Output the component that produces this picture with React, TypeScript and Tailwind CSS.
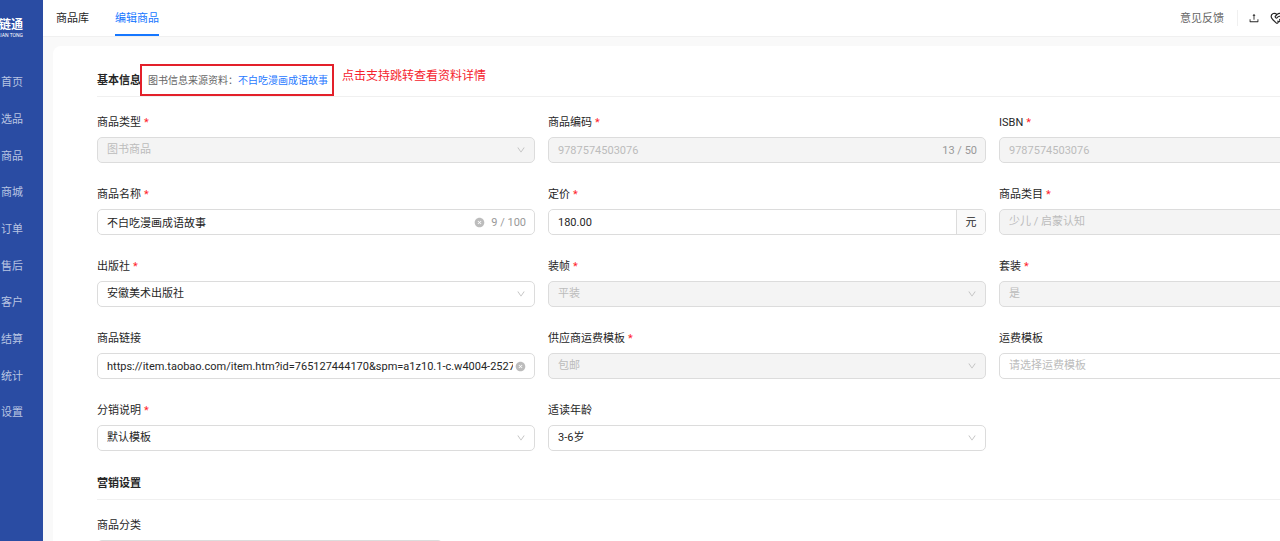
import React from 'react';
import { HeartHandshake } from 'lucide-react';
import { AiFillCloseCircle, AiOutlineDown, AiOutlineUpload } from 'react-icons/ai';

const NAV_ITEMS = ['首页', '选品', '商品', '商城', '订单', '售后', '客户', '结算', '统计', '设置'];

interface FieldProps {
  id: string;
  label: string;
  required?: boolean;
  children: React.ReactNode;
}

const Field: React.FC<FieldProps> = ({ id, label, required, children }) => (
  <div className="flex min-w-0 flex-col gap-[7px]">
    <label htmlFor={id} className="flex h-4 items-center gap-[3px] pt-[2px] leading-4">
      {label}
      {required && <span className="text-[#ff1f2d]">*</span>}
    </label>
    {children}
  </div>
);

interface BoxProps {
  disabled?: boolean;
  children: React.ReactNode;
}

const Box: React.FC<BoxProps> = ({ disabled, children }) => (
  <div
    className={`flex h-[26px] items-center overflow-hidden rounded-[5px] border border-[#dcdcdc] ${
      disabled ? 'bg-[#f4f4f4]' : 'bg-white'
    }`}
  >
    {children}
  </div>
);

interface TextFieldProps {
  id: string;
  label: string;
  value: string;
  required?: boolean;
  disabled?: boolean;
  clearable?: boolean;
  count?: string;
  unit?: string;
}

const TextField: React.FC<TextFieldProps> = ({ id, label, value, required, disabled, clearable, count, unit }) => (
  <Field id={id} label={label} required={required}>
    <Box disabled={disabled}>
      <input
        id={id}
        type="text"
        defaultValue={value}
        disabled={disabled}
        className="ml-[9px] h-full min-w-0 flex-1 bg-transparent outline-none disabled:text-[#bcbcbc]"
      />
      {clearable && (
        <button type="button" aria-label="清除" className="ml-[2px] text-[#bcbcbc]">
          <AiFillCloseCircle className="h-[11px] w-[11px]" />
        </button>
      )}
      {count && <span className="ml-[6px] pt-[2px] text-[#999]">{count}</span>}
      {unit ? (
        <span className="flex h-full w-[29px] items-center justify-center border-l border-[#dcdcdc] bg-[#fafafa] pt-[2px]">
          {unit}
        </span>
      ) : (
        <span className="w-2" />
      )}
    </Box>
  </Field>
);

interface SelectFieldProps {
  id: string;
  label: string;
  value: string;
  required?: boolean;
  disabled?: boolean;
  placeholder?: boolean;
}

const SelectField: React.FC<SelectFieldProps> = ({ id, label, value, required, disabled, placeholder }) => (
  <Field id={id} label={label} required={required}>
    <Box disabled={disabled}>
      <select
        id={id}
        disabled={disabled}
        className={`h-full min-w-0 flex-1 appearance-none bg-transparent pl-[9px] outline-none disabled:text-[#bcbcbc] disabled:opacity-100 ${
          placeholder ? 'text-[#bcbcbc]' : ''
        }`}
      >
        <option>{value}</option>
      </select>
      <AiOutlineDown className="mr-2 h-[10px] w-[10px] text-[#bcbcbc]" />
    </Box>
  </Field>
);

const Sidebar = () => (
  <aside className="flex w-[43px] shrink-0 flex-col overflow-hidden bg-[#2a4ca3] text-white">
    <div className="flex h-[65px] flex-col items-end pt-[17px] pr-5">
      <span className="text-[12px] leading-4 font-bold whitespace-nowrap">链通</span>
      <span className="text-[5px] leading-[5px] whitespace-nowrap">LIAN TONG</span>
    </div>
    <nav className="flex h-[367px] flex-col">
      {NAV_ITEMS.map((item) => (
        <a key={item} href="#" className="flex flex-1 items-center pl-px text-[#b8c4e2]">
          {item}
        </a>
      ))}
    </nav>
  </aside>
);

const Header = () => (
  <header className="flex h-[37px] items-stretch border-b border-[#f0f0f0] bg-white pl-[13px]">
    <nav className="flex gap-[26px]">
      <a href="#" className="flex items-center border-b-2 border-transparent pt-[5px]">商品库</a>
      <a href="#" className="flex items-center border-b-2 border-[#1677ff] pt-[5px] text-[#1677ff]">编辑商品</a>
    </nav>
    <div className="mr-[208px] ml-auto flex items-center">
      <a href="#" className="mr-[13px] pt-[2px] text-[#666]">意见反馈</a>
      <span className="mr-[10px] h-4 w-px bg-[#f0f0f0]" />
      <button type="button" aria-label="上传" className="mr-[10px]">
        <AiOutlineUpload className="h-3 w-3" />
      </button>
      <button type="button" aria-label="合作">
        <HeartHandshake className="h-[14px] w-[14px]" />
      </button>
    </div>
  </header>
);

export default function App() {
  return (
    <div className="h-screen overflow-hidden font-[Roboto,'Noto_Sans_CJK_SC',sans-serif] text-[11px] text-[#262626]">
      <div className="flex h-full min-w-[1492px]">
        <Sidebar />
        <div className="flex min-w-0 flex-1 flex-col bg-[#f9f9f9]">
          <Header />
          <main className="mt-[9px] ml-[10px] flex-1 overflow-hidden rounded-tl-lg bg-white pt-[18px] pr-[55px] pl-11">
            <section>
              <div className="relative flex h-[33px] items-center border-b border-[#f0f0f0] pt-[3px]">
                <h2 className="font-bold">基本信息</h2>
                <p className="absolute top-0 left-[43px] flex h-8 items-center border-2 border-[#e3202a] pr-1 pl-[6px] text-[10px] whitespace-nowrap text-[#666]">
                  图书信息来源资料：
                  <a href="#" className="text-[#2878ff]">不白吃漫画成语故事</a>
                </p>
                <p className="absolute top-0 left-[245px] text-[12px] leading-6 whitespace-nowrap text-[#f5222d]">
                  点击支持跳转查看资料详情
                </p>
              </div>
              <form className="mt-[17px] grid grid-cols-3 gap-x-[13px] gap-y-[23px]">
                <SelectField id="type" label="商品类型" value="图书商品" required disabled />
                <TextField id="code" label="商品编码" value="9787574503076" required disabled count="13 / 50" />
                <TextField id="isbn" label="ISBN" value="9787574503076" required disabled />
                <TextField id="name" label="商品名称" value="不白吃漫画成语故事" required clearable count="9 / 100" />
                <TextField id="price" label="定价" value="180.00" required unit="元" />
                <SelectField id="category" label="商品类目" value="少儿 / 启蒙认知" required disabled />
                <SelectField id="publisher" label="出版社" value="安徽美术出版社" required />
                <SelectField id="binding" label="装帧" value="平装" required disabled />
                <SelectField id="suit" label="套装" value="是" required disabled />
                <TextField
                  id="link"
                  label="商品链接"
                  value="https://item.taobao.com/item.htm?id=765127444170&spm=a1z10.1-c.w4004-25271234567"
                  clearable
                />
                <SelectField id="supplier-freight" label="供应商运费模板" value="包邮" required disabled />
                <SelectField id="freight" label="运费模板" value="请选择运费模板" placeholder />
                <SelectField id="distribution" label="分销说明" value="默认模板" required />
                <SelectField id="age" label="适读年龄" value="3-6岁" />
              </form>
            </section>
            <section className="mt-4">
              <div className="flex h-[33px] items-center border-b border-[#f0f0f0] pt-[3px]">
                <h2 className="font-bold">营销设置</h2>
              </div>
              <div className="mt-[17px] w-[346px]">
                <SelectField id="group" label="商品分类" value="请选择" placeholder />
              </div>
            </section>
          </main>
        </div>
      </div>
    </div>
  );
}
